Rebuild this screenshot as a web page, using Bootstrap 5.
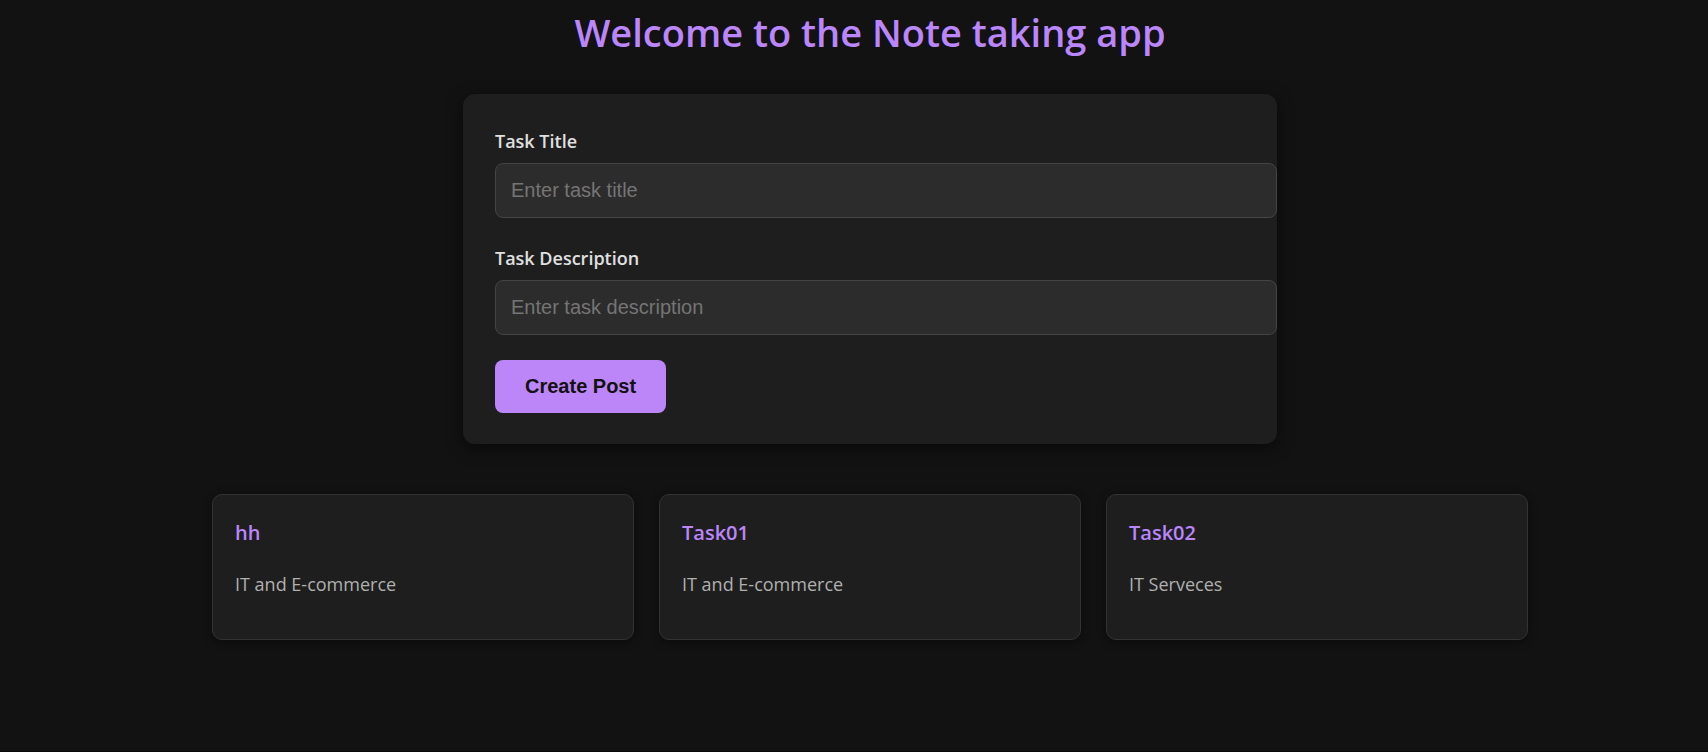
<!DOCTYPE html>
<html lang="en">
<head>
<meta charset="utf-8">
<meta name="viewport" content="width=device-width, initial-scale=1">
<title>Note taking app</title>
<link href="https://cdn.jsdelivr.net/npm/bootstrap@5.3.0/dist/css/bootstrap.min.css" rel="stylesheet">
<style>
  body {
    background: #121212;
    color: #e0e0e0;
    font-family: "Segoe UI", "Open Sans", "Noto Sans", sans-serif;
    font-size: 18px;
    border-bottom: 1px solid #0c070b;
  }
  .page-shell { padding: 4px 0 0 32px; }
  .page-title { color: #bb86fc; font-size: 38px; line-height: 56px; font-weight: 600; margin-bottom: 34px; }
  .note-form {
    max-width: 814px;
    background: #1e1e1e;
    border-radius: 12px;
    padding: 32px 32px 31px;
    box-shadow: 0 4px 16px rgba(0, 0, 0, .5);
  }
  .note-form .form-label { font-size: 18px; line-height: 31px; font-weight: 600; margin-bottom: 6px; }
  .note-field { margin-bottom: 25px; margin-right: -32px; }
  .note-field .form-control {
    height: 55px;
    padding: 0 15px;
    background: #2c2c2c;
    border: 1px solid #444;
    border-radius: 8px;
    color: #e0e0e0;
    font-family: "Liberation Sans", Arial, sans-serif;
    font-size: 20px;
  }
  .note-field .form-control::placeholder { color: #757575; }
  .btn-create, .btn-create:hover {
    height: 53px;
    padding: 0 30px 2px;
    background: #bd86f8;
    color: #121212;
    border: 0;
    border-radius: 8px;
    font-family: "Liberation Sans", Arial, sans-serif;
    font-size: 20px;
    font-weight: 700;
  }
  .note-list { max-width: 1316px; margin-top: 50px; gap: 25px; grid-template-columns: repeat(auto-fit, minmax(280px, 1fr)); }
  .note-card {
    background: #1e1e1e;
    border: 1px solid #333;
    border-radius: 10px;
    padding: 22px 22px 40px;
    box-shadow: 0 2px 10px rgba(0, 0, 0, .4);
  }
  .note-card h2 { color: #bb86fc; font-size: 20px; line-height: 32px; font-weight: 600; margin-bottom: 20px; }
  .note-card p { color: #b0b0b0; font-size: 18px; line-height: 30px; margin: 0; }
</style>
</head>
<body class="min-vh-100">
<main class="page-shell">
  <h1 class="page-title text-center">Welcome to the Note taking app</h1>
  <form class="note-form mx-auto">
    <div class="note-field">
      <label class="form-label d-block" for="title">Task Title</label>
      <input class="form-control" id="title" type="text" placeholder="Enter task title">
    </div>
    <div class="note-field">
      <label class="form-label d-block" for="description">Task Description</label>
      <input class="form-control" id="description" type="text" placeholder="Enter task description">
    </div>
    <button class="btn btn-create" type="submit">Create Post</button>
  </form>
  <section class="note-list d-grid mx-auto" aria-label="Notes">
    <article class="note-card"><h2>hh</h2><p>IT and E-commerce</p></article>
    <article class="note-card"><h2>Task01</h2><p>IT and E-commerce</p></article>
    <article class="note-card"><h2>Task02</h2><p>IT Serveces</p></article>
  </section>
</main>
<script src="https://cdn.jsdelivr.net/npm/bootstrap@5.3.0/dist/js/bootstrap.bundle.min.js"></script>
</body>
</html>
